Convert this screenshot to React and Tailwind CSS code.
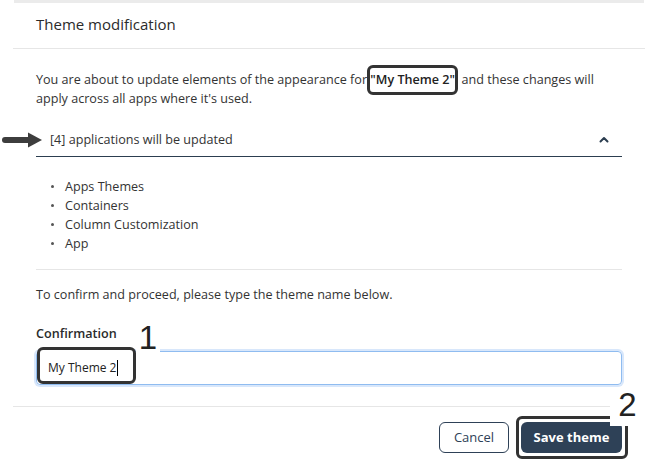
import React from "react";

// Small chevron used on the accordion header
const ChevronUp = () => (
   <svg width="10" height="7" viewBox="0 0 10 7" fill="none">
      <polyline
         points="1.5,5.5 5,2 8.5,5.5"
         stroke="#2c3e50"
         strokeWidth="2"
         strokeLinecap="round"
         strokeLinejoin="round"
      />
   </svg>
);

// Annotation arrow pointing at the accordion
const PointerArrow = () => (
   <svg width="42" height="18" viewBox="0 0 42 18">
      <line x1="4" y1="9" x2="29" y2="9" stroke="#3d3d3d" strokeWidth="6" strokeLinecap="round" />
      <polygon points="27,1.5 41,9 27,16.5" fill="#3d3d3d" />
   </svg>
);

const apps = ["Apps Themes", "Containers", "Column Customization", "App"];

const App = () => {
   return (
      <div className="relative w-[650px] h-[466px] overflow-hidden bg-white font-['Open_Sans',sans-serif] text-[#333]">
         <div className="ml-[13px] w-[632px]">
            <div className="mx-[1px] h-[3px] bg-[#ebebeb]" />
            <div className="flex h-[46px] items-center px-[23px] pb-[3px] border-b border-[#e6e6e6]">
               <h1 className="text-[15px] font-medium text-[#2b2b2b]">Theme modification</h1>
            </div>

            <div className="px-[23px] pt-[21px] pb-[21px]">
               <p className="text-[12.6px] leading-[19px]">
                  You are about to update elements of the appearance for{" "}
                  <span className="font-semibold text-[#222]">"My Theme 2"</span>, and these changes will
                  apply across all apps where it's used.
               </p>

               <div className="mt-[11px] flex h-[38px] items-center justify-between pl-[14px] pr-[13px] pt-[3px] border-b-[1.5px] border-[#2c3e50]">
                  <span className="text-[12.6px] leading-[19px]">[4] applications will be updated</span>
                  <ChevronUp />
               </div>

               <ul className="pt-[20px]">
                  {apps.map((app) => (
                     <li key={app} className="flex items-center text-[12.6px] leading-[19px]">
                        <span className="ml-[15px] mr-[11px] h-[3px] w-[3px] rounded-full bg-[#555]" />
                        {app}
                     </li>
                  ))}
               </ul>

               <div className="mt-[16px] h-px bg-[#e6e6e6]" />

               <p className="mt-[15px] text-[12.6px] leading-[19px]">
                  To confirm and proceed, please type the theme name below.
               </p>

               <label className="mt-[20px] block text-[12.6px] leading-[19px] font-semibold text-[#2b2b2b]">
                  Confirmation
               </label>
               <div className="mt-[8px] flex h-[34px] items-center rounded-[4px] border border-[#8fbcf0] pl-[11px] shadow-[0_0_0_2px_#d8e7fb]">
                  <span className="relative z-20 flex items-center text-[12px] text-[#222]">
                     My Theme 2
                     <span className="ml-[1px] inline-block h-[16px] w-px bg-black" />
                  </span>
               </div>
            </div>

            <div className="flex justify-end gap-[12px] border-t border-[#e6e6e6] pr-[23px] pt-[15px]">
               <button className="h-[31px] w-[70px] rounded-[6px] border border-[#2e4157] text-[13px] font-medium text-[#2e4157]">
                  Cancel
               </button>
               <button className="h-[31px] w-[101px] rounded-[6px] bg-[#2e4157] text-[13px] font-bold text-white">
                  Save theme
               </button>
            </div>
         </div>

         {/* annotations drawn over the screenshot */}
         <div className="absolute left-[367px] top-[65px] h-[30px] w-[91px] rounded-[6px] border-[3px] border-[#333]" />
         <div className="absolute left-[1px] top-[131px]">
            <PointerArrow />
         </div>
         <div className="absolute left-[37px] top-[347px] z-10 h-[37px] w-[99px] rounded-[6px] border-[3px] border-[#333] bg-white" />
         <div className="absolute left-[136px] top-[321px] z-10 h-[33px] w-[24px] bg-white text-center font-['Liberation_Sans',sans-serif] text-[33px] leading-[34px] text-[#222]">
            1
         </div>
         <div className="absolute left-[516px] top-[416px] z-20 h-[43px] w-[112px] rounded-[6px] border-[3px] border-[#333]" />
         <div className="absolute left-[610px] top-[390px] z-30 h-[36px] w-[35px] bg-white text-center font-['Liberation_Sans',sans-serif] text-[33px] leading-[30px] text-[#222]">
            2
         </div>
      </div>
   );
};

export default App;
